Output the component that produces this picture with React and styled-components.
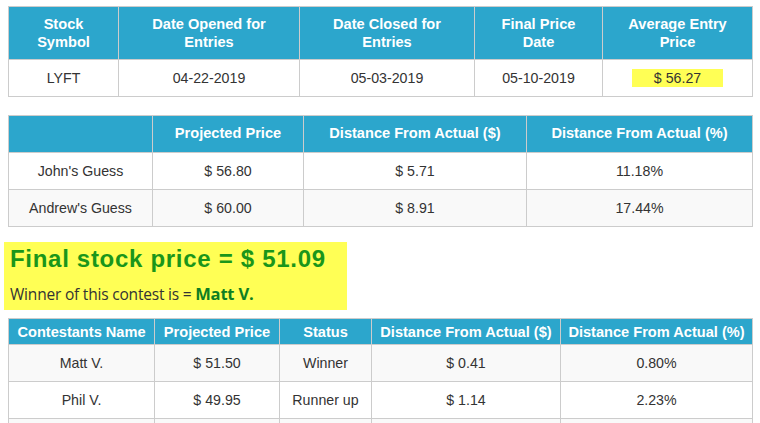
import React from "react";
import styled, { createGlobalStyle } from "styled-components";

const Global = createGlobalStyle`
  html, body { margin: 0; padding: 0; background: #fff; overflow: hidden; }
  body { font-family: "Liberation Sans", Arial, sans-serif; color: #333; }
`;

const Page = styled.div`
  padding: 6px 8px 0 8px;
  display: flex;
  flex-direction: column;
  align-items: flex-start;
`;

const Table = styled.table`
  width: 745px;
  border-collapse: collapse;
  table-layout: fixed;
  margin-bottom: ${(p) => p.$mb || 0}px;
`;

const Col = styled.col`
  width: ${(p) => p.$w}px;
`;

const Th = styled.th`
  background: #2ca6cc;
  color: #fff;
  font-weight: bold;
  font-size: 14.6px;
  line-height: ${(p) => p.$lh || 18}px;
  padding: ${(p) => p.$pad || "8px 8px"};
  border: 1px solid #ccc;
  text-align: center;
  white-space: ${(p) => (p.$nowrap ? "nowrap" : "normal")};
`;

const Tr = styled.tr`
  background: ${(p) => (p.$alt ? "#f9f9f9" : "#fff")};
`;

const Td = styled.td`
  font-size: 14.2px;
  line-height: 20px;
  padding: 8px 8px;
  border: 1px solid #ccc;
  text-align: center;
  color: #333;
`;

const Mark = styled.span`
  display: inline-block;
  background: #ffff55;
  padding: 0 22px;
  line-height: 18px;
`;

const Banner = styled.div`
  margin: 0 0 8px -4px;
  background: #ffff55;
  padding: 3px 6px 5px 6px;
  width: 331px;
`;

const Title = styled.div`
  font-family: "Liberation Sans", Arial, sans-serif;
  font-weight: bold;
  font-size: 24px;
  letter-spacing: 0.7px;
  line-height: 28px;
  color: #1a961a;
`;

const Winner = styled.div`
  font-family: "Open Sans", "Liberation Sans", sans-serif;
  font-size: 15.5px;
  line-height: 22px;
  margin-top: 10px;
  color: #333;
  letter-spacing: -0.2px;
`;

const Name = styled.b`
  color: #0e7e22;
  font-weight: 700;
  font-size: 16.5px;
`;

export default function App() {
  return (
    <>
      <Global />
      <Page>
        <Table $mb={18}>
          <colgroup>
            <Col $w={110} />
            <Col $w={181} />
            <Col $w={175} />
            <Col $w={128} />
            <Col $w={150} />
          </colgroup>
          <thead>
            <tr>
              <Th>Stock<br />Symbol</Th>
              <Th>Date Opened for<br />Entries</Th>
              <Th>Date Closed for<br />Entries</Th>
              <Th>Final Price<br />Date</Th>
              <Th>Average Entry<br />Price</Th>
            </tr>
          </thead>
          <tbody>
            <Tr>
              <Td>LYFT</Td>
              <Td>04-22-2019</Td>
              <Td>05-03-2019</Td>
              <Td>05-10-2019</Td>
              <Td><Mark>$ 56.27</Mark></Td>
            </Tr>
          </tbody>
        </Table>

        <Table $mb={15}>
          <colgroup>
            <Col $w={144} />
            <Col $w={151} />
            <Col $w={223} />
            <Col $w={226} />
          </colgroup>
          <thead>
            <tr>
              <Th $lh={19} $pad="8px 8px 9px"></Th>
              <Th $lh={19} $pad="8px 8px 9px">Projected Price</Th>
              <Th $lh={19} $pad="8px 8px 9px">Distance From Actual ($)</Th>
              <Th $lh={19} $pad="8px 8px 9px">Distance From Actual (%)</Th>
            </tr>
          </thead>
          <tbody>
            <Tr>
              <Td>John's Guess</Td>
              <Td>$ 56.80</Td>
              <Td>$ 5.71</Td>
              <Td>11.18%</Td>
            </Tr>
            <Tr $alt>
              <Td>Andrew's Guess</Td>
              <Td>$ 60.00</Td>
              <Td>$ 8.91</Td>
              <Td>17.44%</Td>
            </Tr>
          </tbody>
        </Table>

        <Banner>
          <Title>Final stock price = $ 51.09</Title>
          <Winner>
            Winner of this contest is = <Name>Matt V.</Name>
          </Winner>
        </Banner>

        <Table>
          <colgroup>
            <Col $w={146} />
            <Col $w={125} />
            <Col $w={92} />
            <Col $w={189} />
            <Col $w={192} />
          </colgroup>
          <thead>
            <tr>
              <Th $pad="4px 6px 3px" $nowrap>Contestants Name</Th>
              <Th $pad="4px 6px 3px" $nowrap>Projected Price</Th>
              <Th $pad="4px 6px 3px" $nowrap>Status</Th>
              <Th $pad="4px 6px 3px" $nowrap>Distance From Actual ($)</Th>
              <Th $pad="4px 6px 3px" $nowrap>Distance From Actual (%)</Th>
            </tr>
          </thead>
          <tbody>
            <Tr $alt>
              <Td>Matt V.</Td>
              <Td>$ 51.50</Td>
              <Td>Winner</Td>
              <Td>$ 0.41</Td>
              <Td>0.80%</Td>
            </Tr>
            <Tr>
              <Td>Phil V.</Td>
              <Td>$ 49.95</Td>
              <Td>Runner up</Td>
              <Td>$ 1.14</Td>
              <Td>2.23%</Td>
            </Tr>
            <Tr $alt>
              <Td>&nbsp;</Td>
              <Td>&nbsp;</Td>
              <Td>&nbsp;</Td>
              <Td>&nbsp;</Td>
              <Td>&nbsp;</Td>
            </Tr>
          </tbody>
        </Table>
      </Page>
    </>
  );
}
